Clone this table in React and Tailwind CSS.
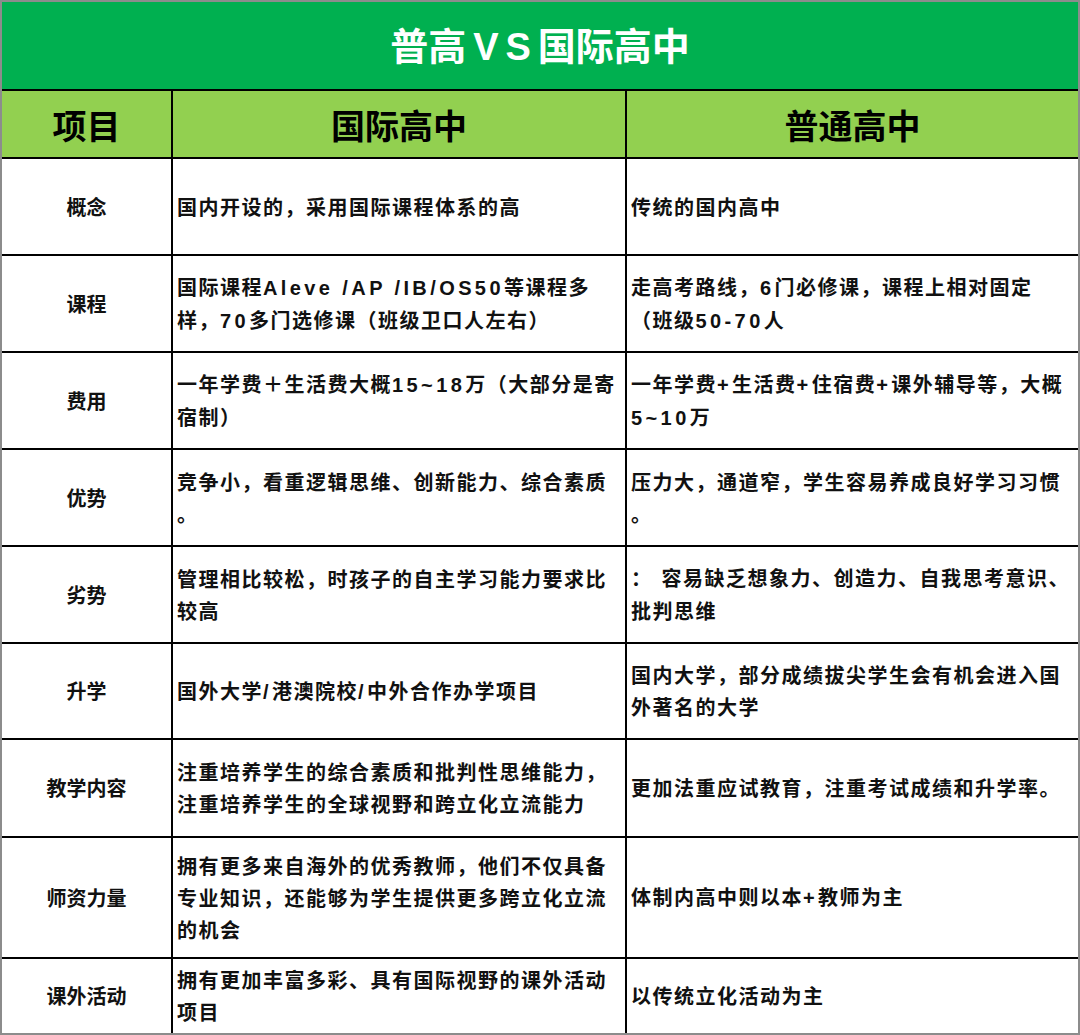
import React from "react";

const rows = [
  { k: "概念", a: ["国内开设的，采用国际课程体系的高"], b: ["传统的国内高中"], h: "h-[97px]" },
  { k: "课程", a: ["国际课程Aleve /AP /IB/OS50等课程多", "样，70多门选修课（班级卫口人左右）"], b: ["走高考路线，6门必修课，课程上相对固定", "（班级50-70人"], h: "h-[97px]" },
  { k: "费用", a: ["一年学费＋生活费大概15~18万（大部分是寄", "宿制）"], b: ["一年学费+生活费+住宿费+课外辅导等，大概", "5~10万"], h: "h-[97px]" },
  { k: "优势", a: ["竞争小，看重逻辑思维、创新能力、综合素质", "。"], b: ["压力大，通道窄，学生容易养成良好学习习惯", "。"], h: "h-[97px]" },
  { k: "劣势", a: ["管理相比较松，时孩子的自主学习能力要求比", "较高"], b: ["： 容易缺乏想象力、创造力、自我思考意识、", "批判思维"], h: "h-[97px]" },
  { k: "升学", a: ["国外大学/港澳院校/中外合作办学项目"], b: ["国内大学，部分成绩拔尖学生会有机会进入国", "外著名的大学"], h: "h-[96px]" },
  { k: "教学内容", a: ["注重培养学生的综合素质和批判性思维能力，", "注重培养学生的全球视野和跨立化立流能力"], b: ["更加法重应试教育，注重考试成绩和升学率。"], h: "h-[98px]" },
  { k: "师资力量", a: ["拥有更多来自海外的优秀教师，他们不仅具备", "专业知识，还能够为学生提供更多跨立化立流", "的机会"], b: ["体制内高中则以本+教师为主"], h: "h-[121px]" },
  { k: "课外活动", a: ["拥有更加丰富多彩、具有国际视野的课外活动", "项目"], b: ["以传统立化活动为主"], h: "h-[76px]" },
];

function Mixed({ text }) {
  const parts = text.split(/([\x20-\x7E]+)/).filter((p) => p.length > 0);
  return parts.map((p, i) =>
    /^[\x20-\x7E]+$/.test(p) ? (
      <span
        key={i}
        className="tracking-[3.4px]"
        style={{ fontFamily: '"Liberation Sans", "Noto Sans CJK SC", sans-serif' }}
      >
        {p}
      </span>
    ) : (
      <span key={i}>{p}</span>
    )
  );
}

function Lines({ lines }) {
  return (
    <div className="text-[20px] leading-[32px] font-bold tracking-[1.5px] text-[#111]">
      {lines.map((l, i) => (
        <div key={i} className="whitespace-nowrap">
          <Mixed text={l} />
        </div>
      ))}
    </div>
  );
}

export default function App() {
  return (
    <div
      className="w-[1080px] h-[1035px] border-2 border-[#8c8c8c] bg-white flex flex-col overflow-hidden"
      style={{ fontFamily: '"Noto Sans CJK SC", "Noto Sans", sans-serif' }}
    >
      <div className="h-[87px] bg-[#00b050] flex items-center justify-center">
        <span className="text-white text-[38px] font-bold">
          普高
          <span
            className="tracking-[7px] ml-[7px]"
            style={{ fontFamily: '"Liberation Sans", "Noto Sans CJK SC", sans-serif' }}
          >
            VS
          </span>
          国际高中
        </span>
      </div>
      <div className="h-[68px] border-t-2 border-black bg-[#92d050] flex">
        <div className="w-[171px] border-r-2 border-black flex items-center justify-center text-[34px] font-bold text-black">项目</div>
        <div className="w-[454px] border-r-2 border-black flex items-center justify-center text-[34px] font-bold text-black">国际高中</div>
        <div className="flex-1 flex items-center justify-center text-[34px] font-bold text-black">普通高中</div>
      </div>
      {rows.map((r) => (
        <div key={r.k} className={`${r.h} border-t-2 border-black flex`}>
          <div className="w-[171px] border-r-2 border-black flex items-center justify-center text-[20px] font-bold text-[#111]">{r.k}</div>
          <div className="w-[454px] border-r-2 border-black flex items-center pl-[4px]">
            <Lines lines={r.a} />
          </div>
          <div className="flex-1 flex items-center pl-[4px]">
            <Lines lines={r.b} />
          </div>
        </div>
      ))}
    </div>
  );
}
